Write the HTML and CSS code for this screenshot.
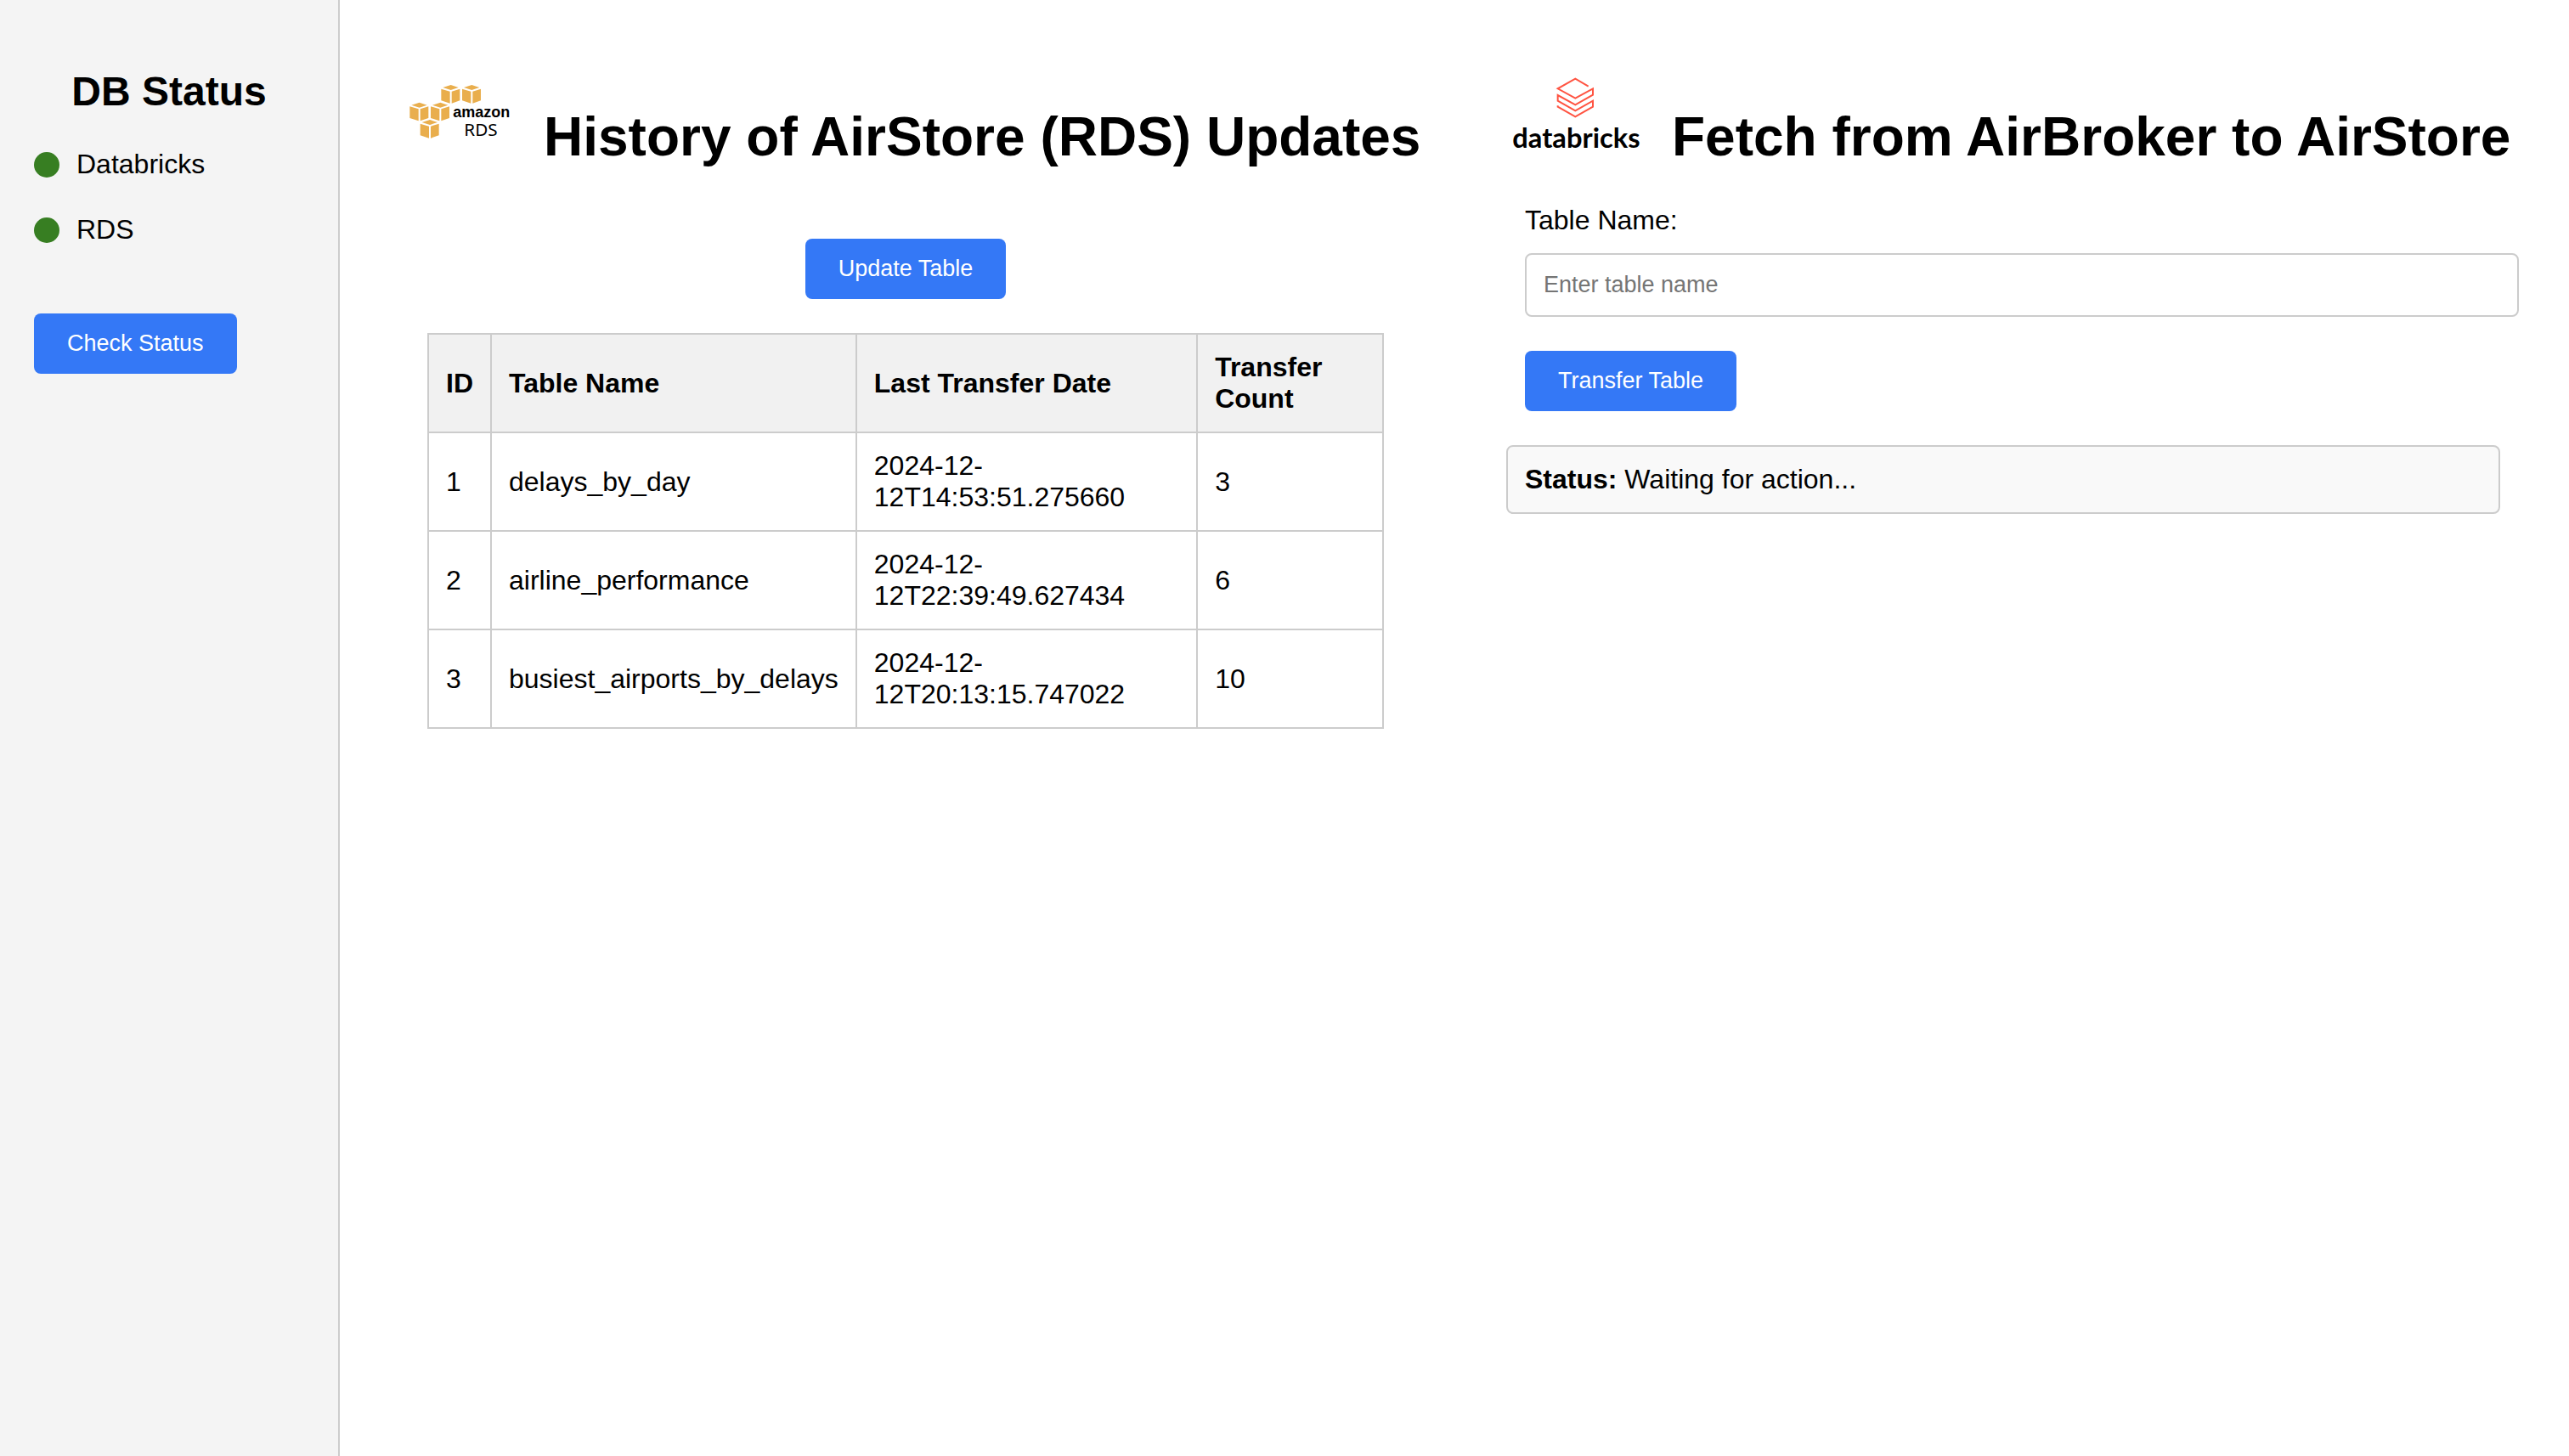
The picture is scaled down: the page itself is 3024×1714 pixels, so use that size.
FILE: index.html
```html
<!DOCTYPE html>
<html lang="en">
<head>
  <meta charset="utf-8">
  <title>AirStore</title>
  <link rel="stylesheet" href="styles.css">
</head>
<body>
  <div class="layout">
    <aside class="sidebar">
      <h2 class="sidebar-title">DB Status</h2>
      <ul class="status-list">
        <li class="status-item"><span class="status-dot"></span>Databricks</li>
        <li class="status-item"><span class="status-dot"></span>RDS</li>
      </ul>
      <button class="button" type="button">Check Status</button>
    </aside>

    <main class="main">
      <section class="history">
        <header class="panel-header">
          <svg class="logo-rds" viewBox="30 0 420 300" role="img" aria-label="Amazon RDS">
            <defs>
              <g id="cube">
                <path d="M6 9L34 0L61 9L34 18Z"/>
                <path d="M0 14L31 23V65L0 55Z"/>
                <path d="M37 23L66 14V55L37 65Z"/>
              </g>
            </defs>
            <g fill="#e9ae4d">
              <use href="#cube" x="148" y="60"/>
              <use href="#cube" x="222" y="60"/>
              <use href="#cube" x="37" y="122"/>
              <use href="#cube" x="111" y="122"/>
              <use href="#cube" x="74" y="183"/>
            </g>
            <text class="logo-amazon-text" x="190" y="175">amazon</text>
            <text class="logo-rds-text" x="229" y="239">RDS</text>
          </svg>
          <h1 class="panel-title">History of AirStore (RDS) Updates</h1>
        </header>
        <div class="history-body">
          <button class="button" type="button">Update Table</button>
          <table class="history-table">
            <thead>
              <tr><th>ID</th><th>Table Name</th><th>Last Transfer Date</th><th>Transfer Count</th></tr>
            </thead>
            <tbody>
              <tr><td>1</td><td>delays_by_day</td><td>2024-12-12T14:53:51.275660</td><td>3</td></tr>
              <tr><td>2</td><td>airline_performance</td><td>2024-12-12T22:39:49.627434</td><td>6</td></tr>
              <tr><td>3</td><td>busiest_airports_by_delays</td><td>2024-12-12T20:13:15.747022</td><td>10</td></tr>
            </tbody>
          </table>
        </div>
      </section>

      <section class="fetch">
        <header class="panel-header">
          <svg class="logo-databricks" viewBox="9 0 525 330" role="img" aria-label="Databricks">
            <path d="M299 65L253 38L191 73L253 107L315 73V95L253 130L191 96V116L253 151L315 116V137L253 172L191 137V133" fill="none" stroke="#ff5442" stroke-width="6"/>
            <text class="logo-databricks-text" x="31" y="281">databricks</text>
          </svg>
          <h1 class="panel-title">Fetch from AirBroker to AirStore</h1>
        </header>
        <form class="fetch-form">
          <label class="field-label" for="table-name">Table Name:</label>
          <input class="field-input" id="table-name" type="text" placeholder="Enter table name">
          <button class="button" type="button">Transfer Table</button>
        </form>
        <div class="status-box" role="status"><strong>Status:</strong> Waiting for action...</div>
      </section>
    </main>
  </div>
</body>
</html>
```
FILE: styles.css
```css
* {
  box-sizing: border-box;
}

body {
  margin: 0;
  background: #fff;
  color: #000;
  font: 32px/37px "Liberation Sans", Arial, sans-serif;
}

.layout {
  display: flex;
  min-height: 100vh;
}

/* Sidebar */

.sidebar {
  flex: none;
  width: 400px;
  padding: 80px 40px 40px;
  border-right: 2px solid #ccc;
  background: #f4f4f4;
}

.sidebar-title {
  margin: 0 0 40px;
  font-size: 48px;
  line-height: 55px;
  text-align: center;
}

.status-list {
  display: flex;
  flex-direction: column;
  gap: 40px;
  margin: 0 0 80px;
  padding: 0;
  list-style: none;
}

.status-item {
  display: flex;
  align-items: center;
  gap: 20px;
}

.status-dot {
  width: 30px;
  height: 30px;
  border-radius: 50%;
  background: #377e22;
}

.button {
  padding: 20px 39px;
  border: 0;
  border-radius: 8px;
  background: #3478f6;
  color: #fff;
  font-family: inherit;
  font-size: 27px;
  line-height: 31px;
  cursor: pointer;
}

/* Panels */

.main {
  display: grid;
  flex: 1;
  grid-template-columns: minmax(0, 1fr) minmax(0, 1fr);
  gap: 101px;
  padding: 80px 59px 40px 80px;
}

.panel-header {
  display: flex;
  align-items: flex-start;
  gap: 20px;
}

.panel-title {
  margin: 44px 0 0;
  font-size: 64px;
  line-height: 74px;
  white-space: nowrap;
}

.logo-rds {
  flex: none;
  width: 140px;
  height: 100px;
}

.logo-databricks {
  flex: none;
  width: 175px;
  height: 110px;
}

.logo-amazon-text {
  font: bold 54px "Liberation Sans", sans-serif;
}

.logo-rds-text {
  font: 62px "Noto Sans", sans-serif;
}

.logo-databricks-text {
  font: bold 98px Lato, sans-serif;
}

.history-body {
  display: flex;
  flex-direction: column;
  align-items: center;
  gap: 40px;
  padding: 83px 43px 0 23px;
}

.history-table {
  width: 100%;
  border-collapse: collapse;
}

.history-table th,
.history-table td {
  padding: 20px;
  border: 2px solid #ccc;
  text-align: left;
}

.history-table th {
  background: #f1f1f1;
}

.fetch-form {
  display: flex;
  flex-direction: column;
  align-items: flex-start;
  padding: 43px 0 40px 22px;
}

.field-label {
  margin-bottom: 20px;
}

.field-input {
  width: 100%;
  margin-bottom: 40px;
  padding: 20px;
  border: 2px solid #ccc;
  border-radius: 8px;
  font-family: inherit;
  font-size: 27px;
  line-height: 31px;
}

.field-input::placeholder {
  color: #757575;
}

.status-box {
  margin-right: 22px;
  padding: 20px;
  border: 2px solid #ccc;
  border-radius: 8px;
  background: #f9f9f9;
}
```
